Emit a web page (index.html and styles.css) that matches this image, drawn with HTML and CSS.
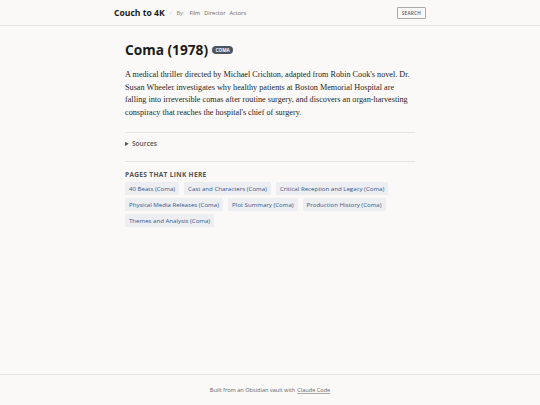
FILE: index.html
```html
<!DOCTYPE html>
<html lang="en">
<head>
  <meta charset="UTF-8">
  <title>Coma (1978) - Couch to 4K</title>
  <link rel="stylesheet" href="styles.css">
</head>
<body>
  <header class="site-header">
    <div class="header-inner">
      <a class="brand" href="#">Couch to 4K</a>
      <span class="sep">/</span>
      <nav class="by-nav">
        <span class="by-label">By:</span>
        <a href="#">Film</a>
        <a href="#">Director</a>
        <a href="#">Actors</a>
      </nav>
      <button class="search-btn">SEARCH</button>
    </div>
  </header>

  <main class="page">
    <h1 class="title">Coma (1978) <span class="badge">COMA</span></h1>

    <p class="summary">A medical thriller directed by Michael Crichton, adapted from Robin Cook's novel. Dr. Susan Wheeler investigates why healthy patients at Boston Memorial Hospital are falling into irreversible comas after routine surgery, and discovers an organ-harvesting conspiracy that reaches the hospital's chief of surgery.</p>

    <details class="sources">
      <summary>Sources</summary>
    </details>

    <section class="backlinks">
      <h2>Pages that link here</h2>
      <div class="tags">
        <a href="#">40 Beats (Coma)</a>
        <a href="#">Cast and Characters (Coma)</a>
        <a href="#">Critical Reception and Legacy (Coma)</a>
        <a href="#">Physical Media Releases (Coma)</a>
        <a href="#">Plot Summary (Coma)</a>
        <a href="#">Production History (Coma)</a>
        <a href="#">Themes and Analysis (Coma)</a>
      </div>
    </section>
  </main>

  <footer class="site-footer">
    Built from an Obsidian vault with <a href="#">Claude Code</a>
  </footer>
</body>
</html>
```

FILE: styles.css
```css
* {
  box-sizing: border-box;
}

html, body {
  height: 100%;
}

body {
  margin: 0;
  background: #faf9f7;
  color: #222;
  font-family: 'Open Sans', 'Noto Sans', sans-serif;
  display: flex;
  flex-direction: column;
}

a {
  color: inherit;
  text-decoration: none;
}

.site-header {
  height: 26px;
  border-bottom: 1px solid #e6e4e0;
}

.header-inner {
  max-width: 312px;
  margin: 0 auto;
  height: 100%;
  display: flex;
  align-items: center;
}

.brand {
  font-weight: 700;
  font-size: 8.6px;
  color: #1c1c1c;
}

.sep {
  color: #ccc;
  font-size: 5px;
  margin: 0 5px 0 5px;
}

.by-nav {
  display: flex;
  gap: 4px;
  font-size: 5.6px;
  color: #666;
}

.by-label {
  margin-right: 1px;
  color: #888;
}

.search-btn {
  margin-left: auto;
  font-family: inherit;
  font-size: 4.6px;
  font-weight: 600;
  letter-spacing: 0.3px;
  color: #555;
  background: transparent;
  border: 1px solid #aaa;
  padding: 2px 4px;
  border-radius: 1px;
}

.page {
  flex: 1;
  width: 290px;
  margin: 0 auto;
  padding-top: 14px;
}

.title {
  margin: 0;
  font-size: 13.7px;
  font-weight: 700;
  color: #1c1c1c;
  display: flex;
  align-items: center;
  gap: 4px;
}

.badge {
  font-size: 4.6px;
  font-weight: 700;
  color: #fff;
  background: #4b5563;
  border-radius: 5px;
  padding: 1px 3.5px;
}

.summary {
  margin: 10px 0 0;
  max-width: 286px;
  font-family: 'Liberation Serif', serif;
  font-size: 8.2px;
  line-height: 12.6px;
  color: #262626;
}

.sources {
  margin-top: 13px;
  border-top: 1px solid #e5e3df;
  border-bottom: 1px solid #e5e3df;
  padding: 6px 0 13px;
  font-size: 6.6px;
  font-weight: 600;
  color: #555;
}

.sources summary {
  cursor: pointer;
}

.backlinks h2 {
  margin: 8px 0 3px;
  font-size: 6.6px;
  font-weight: 700;
  letter-spacing: 0.3px;
  text-transform: uppercase;
  color: #555;
}

.tags {
  display: flex;
  flex-wrap: wrap;
  gap: 3px 5px;
}

.tags a {
  background: #eceef1;
  color: #34578f;
  font-size: 6.1px;
  padding: 2px 4px;
  border-radius: 1px;
}

.site-footer {
  border-top: 1px solid #e6e4e0;
  height: 31px;
  display: flex;
  align-items: center;
  justify-content: center;
  font-size: 5.6px;
  color: #666;
}

.site-footer a {
  margin-left: 2px;
  text-decoration: underline;
  text-decoration-color: #aaa;
}
```
